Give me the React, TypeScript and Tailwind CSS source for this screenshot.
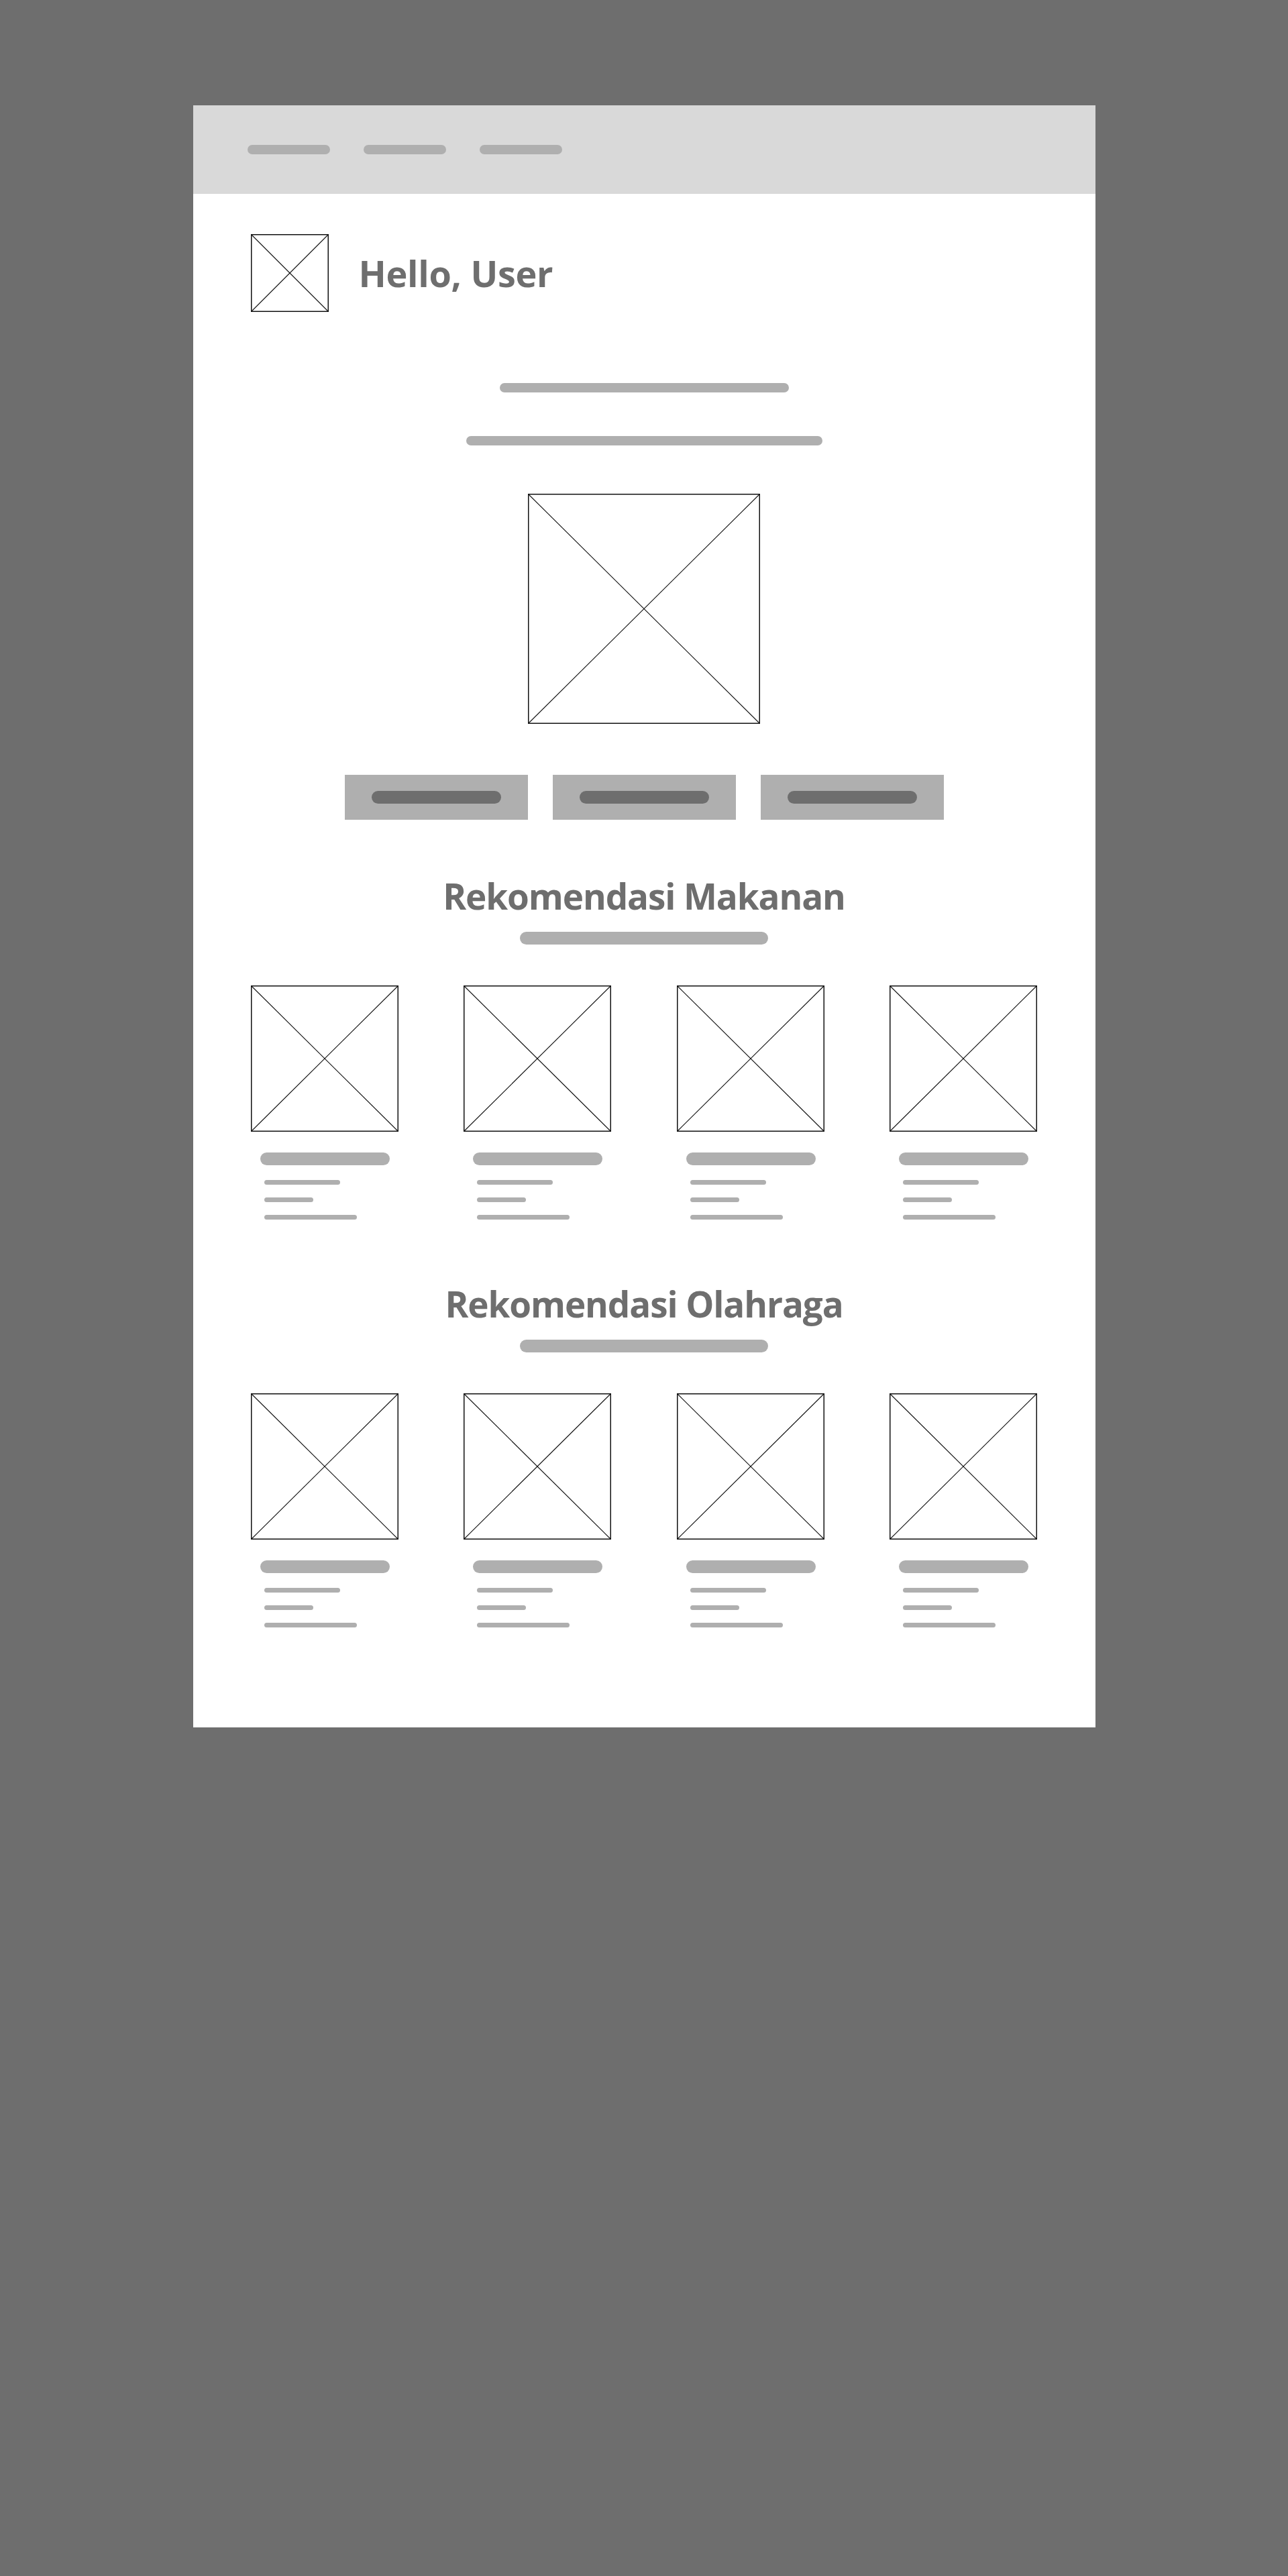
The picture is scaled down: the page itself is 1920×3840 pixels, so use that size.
import React from "react";

function Placeholder({ w, h, className }: { w: number; h: number; className?: string }) {
  return (
    <svg
      className={"block shrink-0 " + (className ?? "")}
      width={w}
      height={h}
      viewBox={`0 0 ${w} ${h}`}
    >
      <rect x={0.75} y={0.75} width={w - 1.5} height={h - 1.5} fill="#ffffff" stroke="#111111" strokeWidth={1.5} />
      <line x1={1} y1={1} x2={w - 1} y2={h - 1} stroke="#111111" strokeWidth={1.1} />
      <line x1={w - 1} y1={1} x2={1} y2={h - 1} stroke="#111111" strokeWidth={1.1} />
    </svg>
  );
}

function Card() {
  return (
    <div className="flex w-[220px] flex-col">
      <Placeholder w={220} h={218} />
      <div className="ml-[14px] mt-[31px] h-[19px] w-[193px] rounded-full bg-[#afafaf]" />
      <div className="ml-[20px] mt-[22px] flex flex-col gap-[19px]">
        <div className="h-[7px] w-[113px] rounded-full bg-[#afafaf]" />
        <div className="h-[7px] w-[73px] rounded-full bg-[#afafaf]" />
        <div className="h-[7px] w-[138px] rounded-full bg-[#afafaf]" />
      </div>
    </div>
  );
}

function Section({ title, top }: { title: string; top: string }) {
  return (
    <section className={"flex flex-col items-center " + top}>
      <h2 className="text-[53px] font-bold leading-none tracking-[-1.1px] text-[#6e6e6e]">{title}</h2>
      <div className="mt-[27px] h-[19px] w-[370px] rounded-full bg-[#afafaf]" />
      <div className="mt-[61px] flex w-full justify-between">
        <Card />
        <Card />
        <Card />
        <Card />
      </div>
    </section>
  );
}

export default function App() {
  return (
    <div
      className="min-h-[3840px] w-full bg-[#6e6e6e] pt-[157px]"
      style={{ fontFamily: "'Open Sans', Lato, sans-serif" }}
    >
      <div className="mx-auto w-[1345px] bg-white">
        <nav className="flex h-[132px] items-center gap-[50px] bg-[#d9d9d9] pl-[81px]">
          <div className="h-[14px] w-[123px] rounded-full bg-[#afafaf]" />
          <div className="h-[14px] w-[123px] rounded-full bg-[#afafaf]" />
          <div className="h-[14px] w-[123px] rounded-full bg-[#afafaf]" />
        </nav>

        <main className="px-[86px] pb-[149px]">
          <div className="mt-[60px] flex items-center gap-[45px]">
            <Placeholder w={116} h={116} />
            <h1 className="text-[54px] font-bold leading-none tracking-[-0.3px] text-[#6e6e6e]">Hello, User</h1>
          </div>

          <div className="flex flex-col items-center">
            <div className="mt-[106px] h-[14px] w-[431px] rounded-full bg-[#afafaf]" />
            <div className="mt-[65px] h-[14px] w-[531px] rounded-full bg-[#afafaf]" />
            <Placeholder w={346} h={343} className="mt-[72px]" />
            <div className="mt-[76px] flex gap-[37px]">
              {[0, 1, 2].map((i) => (
                <div key={i} className="flex h-[67px] w-[273px] items-center justify-center bg-[#afafaf]">
                  <div className="h-[19px] w-[193px] rounded-full bg-[#6e6e6e]" />
                </div>
              ))}
            </div>
          </div>

          <Section title="Rekomendasi Makanan" top="mt-[87px]" />
          <Section title="Rekomendasi Olahraga" top="mt-[99px]" />
        </main>
      </div>
    </div>
  );
}
